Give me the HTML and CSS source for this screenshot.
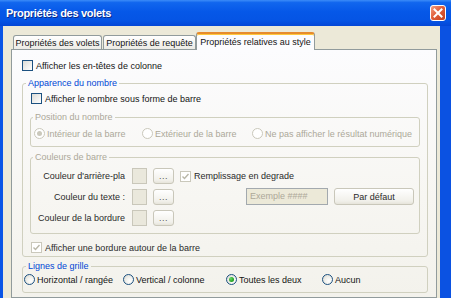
FILE: index.html
```html
<!DOCTYPE html>
<html lang="fr">
<head>
<meta charset="utf-8">
<title>Propriétés des volets</title>
<link rel="stylesheet" href="styles.css">
</head>
<body>
<div class="window">
  <div class="titlebar">
    <span class="title">Propriétés des volets</span>
    <span class="close" aria-label="Fermer">
      <svg width="16" height="16" viewBox="0 0 16 16">
        <defs>
          <linearGradient id="cg" x1="0" y1="0" x2="1" y2="1">
            <stop offset="0" stop-color="#F4A48A"/>
            <stop offset="0.45" stop-color="#E2603C"/>
            <stop offset="1" stop-color="#C23D1A"/>
          </linearGradient>
        </defs>
        <rect x="0.5" y="0.5" width="15" height="15" rx="2.5" fill="url(#cg)" stroke="#FFFFFF"/>
        <path d="M4.5 4.5 L11.5 11.5 M11.5 4.5 L4.5 11.5" stroke="#FFFFFF" stroke-width="2" stroke-linecap="square"/>
      </svg>
    </span>
  </div>
  <div class="frame">
    <div class="tabs">
      <div class="tab t1">Propriétés des volets</div>
      <div class="tab t2">Propriétés de requête</div>
      <div class="tab t3 active">Propriétés relatives au style</div>
    </div>
    <div class="panel">
      <div class="check first"><span class="box"></span><span>Afficher les en-têtes de colonne</span></div>

      <fieldset class="group g-number">
        <legend>Apparence du nombre</legend>
        <div class="check inset"><span class="box"></span><span>Afficher le nombre sous forme de barre</span></div>

        <fieldset class="sub sub-pos dis">
          <legend>Position du nombre</legend>
          <div class="radios-pos">
            <div class="radio"><span class="rb"><span class="dot"></span></span><span>Intérieur de la barre</span></div>
            <div class="radio"><span class="rb"></span><span>Extérieur de la barre</span></div>
            <div class="radio"><span class="rb"></span><span>Ne pas afficher le résultat numérique</span></div>
          </div>
        </fieldset>

        <fieldset class="sub sub-colors">
          <legend>Couleurs de barre</legend>
          <div class="color-grid">
            <span class="clabel">Couleur d'arrière-pla</span>
            <span class="swatch"></span>
            <span class="btn small">...</span>
            <div class="check dis fill"><span class="box"><svg width="9" height="9" viewBox="0 0 9 9"><path d="M1.5 4.5 L3.5 6.5 L7.5 2" fill="none" stroke="#B9B7A8" stroke-width="1.4"/></svg></span><span class="dark">Remplissage en degrade</span></div>

            <span class="clabel">Couleur du texte :</span>
            <span class="swatch"></span>
            <span class="btn small">...</span>
            <div class="sample-row"><span class="textbox">Exemple ####</span><span class="btn default">Par défaut</span></div>

            <span class="clabel">Couleur de la bordure</span>
            <span class="swatch"></span>
            <span class="btn small">...</span>
            <span></span>
          </div>
        </fieldset>

        <div class="check dis inset border-row"><span class="box"><svg width="9" height="9" viewBox="0 0 9 9"><path d="M1.5 4.5 L3.5 6.5 L7.5 2" fill="none" stroke="#B9B7A8" stroke-width="1.4"/></svg></span><span class="dark">Afficher une bordure autour de la barre</span></div>
      </fieldset>

      <fieldset class="group g-grid">
        <legend>Lignes de grille</legend>
        <div class="radios-grid">
          <div class="radio"><span class="rb"></span><span>Horizontal / rangée</span></div>
          <div class="radio"><span class="rb"></span><span>Vertical / colonne</span></div>
          <div class="radio"><span class="rb"><span class="dot"></span></span><span>Toutes les deux</span></div>
          <div class="radio"><span class="rb"></span><span>Aucun</span></div>
        </div>
      </fieldset>
    </div>
  </div>
</div>
</body>
</html>
```

FILE: styles.css
```css
* { box-sizing: border-box; }
html, body { margin: 0; padding: 0; }
body {
  width: 451px;
  height: 298px;
  overflow: hidden;
  background: #0B52E4;
  font-family: "Liberation Sans", Arial, sans-serif;
  font-size: 9px;
  color: #141414;
}
.window {
  display: flex;
  flex-direction: column;
  height: 298px;
}
.titlebar {
  flex: none;
  height: 26px;
  display: flex;
  align-items: center;
  justify-content: space-between;
  padding: 0 5px 0 6px;
  background: linear-gradient(180deg, #3C8CF8 0%, #1166EE 10%, #0658E8 45%, #0554E4 80%, #0447D6 100%);
}
.title {
  color: #FFFFFF;
  font-weight: bold;
  font-size: 11px;
  letter-spacing: -0.3px;
  text-shadow: 1px 1px 0 #0A2A8A;
}
.close { display: flex; width: 16px; height: 16px; }
.frame {
  flex: 1;
  min-height: 0;
  display: flex;
  flex-direction: column;
  background: #ECE9D8;
  border-left: 3px solid #0A55E6;
  border-right: 11px solid #0B52E2;
  padding: 6px 3px 0 8px;
}
.tabs {
  flex: none;
  height: 17px;
  display: flex;
  align-items: flex-end;
  padding-left: 2px;
}
.tab {
  height: 14px;
  display: flex;
  align-items: center;
  justify-content: center;
  white-space: nowrap;
  border: 1px solid #919B9C;
  border-bottom: none;
  border-radius: 3px 3px 0 0;
  background: linear-gradient(180deg, #FFFFFF, #ECEBE5);
  color: #141414;
}
.t1 { width: 89px; margin-right: 1px; }
.t2 { width: 93px; }
.t3 { width: 119px; }
.tab.active {
  position: relative;
  z-index: 2;
  height: 18px;
  margin-bottom: -1px;
  padding-bottom: 1px;
  background: #FCFCFE;
  border-top: 2px solid #E68B2C;
  box-shadow: inset 0 1px 0 #FFC83C;
}
.panel {
  flex: 1;
  min-height: 0;
  border: 1px solid #919B9C;
  background: linear-gradient(180deg, #FCFCFE 0%, #F7F6F2 60%, #F3F2EC 100%);
  padding: 9px 8px 0 10px;
}
.check, .radio {
  display: flex;
  align-items: center;
  height: 13px;
  gap: 3px;
  white-space: nowrap;
}
.radio { gap: 2px; }
.box {
  flex: none;
  width: 11px;
  height: 11px;
  border: 1px solid #1C5180;
  background: linear-gradient(135deg, #DCDCD7, #FFFFFF);
  display: flex;
  align-items: center;
  justify-content: center;
}
.dis .box { border-color: #CAC8BB; background: #FFFFFF; }
.rb {
  flex: none;
  width: 11px;
  height: 11px;
  border-radius: 50%;
  border: 1px solid #1C5180;
  background: radial-gradient(circle at 65% 65%, #FFFFFF 0%, #F2F2EE 40%, #D6D5CC 100%);
  display: flex;
  align-items: center;
  justify-content: center;
}
.dot {
  width: 5px;
  height: 5px;
  border-radius: 50%;
  background: radial-gradient(circle at 35% 35%, #6BDD68 0%, #2AA82A 55%, #1A871A 100%);
}
.dis .rb { border-color: #CAC8BB; background: #FFFFFF; }
.dis .dot { background: #CAC8BB; }
.dis { color: #ACA899; }
.dis .dark, .dark { color: #2A2A2A; }

fieldset {
  margin: 0;
  min-width: 0;
  border: 1px solid #D0D0BF;
  border-radius: 3px;
}
legend {
  height: 13px;
  line-height: 13px;
  padding: 0 2px;
  white-space: nowrap;
}
.group { padding: 2px 7px 2px 7px; margin-top: 5px; }
.group > legend { color: #0046D5; margin-left: -4px; }
.inset { margin-left: 1px; }
.sub { padding: 3px 0 6px 3px; margin-top: 6px; }
.sub > legend { color: #ACA899; margin-left: -1px; }
.sub-colors { padding: 4px 0 7px 0; margin-top: 4px; }
.sub-colors > legend { margin-left: 2px; }
.border-row { margin-top: 7px; }
.g-grid { margin-top: 3px; padding: 0 1px 6px 1px; }
.g-grid > legend { margin-left: 2px; }

.radios-pos {
  display: grid;
  grid-template-columns: 108px 110px auto;
}
.radios-grid {
  display: grid;
  grid-template-columns: 99px 103px 96px auto;
}
.color-grid {
  display: grid;
  grid-template-columns: 95px 15px 21px 1fr;
  grid-auto-rows: 16px;
  column-gap: 6px;
  row-gap: 5px;
  align-items: center;
}
.clabel {
  text-align: right;
  padding-right: 1px;
  white-space: nowrap;
  color: #2A2A2A;
}
.swatch {
  height: 16px;
  border: 1px solid #C9C7BA;
  background: #EAE8DC;
}
.btn {
  display: flex;
  align-items: center;
  justify-content: center;
  height: 16px;
  border: 1px solid #C9C7BA;
  border-radius: 3px;
  background: linear-gradient(180deg, #FFFFFF, #F1F0EA 80%, #E6E4DA);
  color: #555555;
}
.btn.small { letter-spacing: 0.5px; }
.fill { gap: 3px; }
.sample-row {
  display: flex;
  align-items: center;
  gap: 6px;
  margin-left: 66px;
  margin-top: -2px;
}
.textbox {
  width: 82px;
  height: 17px;
  display: flex;
  align-items: center;
  padding-left: 3px;
  border: 1px solid #A3A9AE;
  background: #ECE9D8;
  color: #ACA899;
  white-space: nowrap;
}
.btn.default {
  width: 80px;
  height: 17px;
  color: #2A2A2A;
  margin-top: 1px;
}
```
